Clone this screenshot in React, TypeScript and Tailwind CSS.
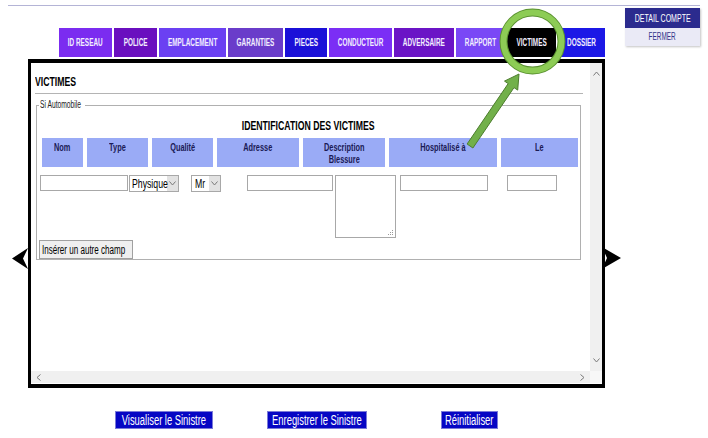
import React from "react";

const N = ({
  children,
  left = false,
  tight = false,
  className = "",
}: {
  children: React.ReactNode;
  left?: boolean;
  tight?: boolean;
  className?: string;
}) => (
  <span
    className={`inline-block whitespace-nowrap ${tight ? "scale-x-[0.64]" : "scale-x-[0.67]"} ${
      left ? "origin-left" : "origin-center"
    } ${className}`}
  >
    {children}
  </span>
);

const tabs: { label: string; w: string; bg: string }[] = [
  { label: "ID RESEAU", w: "w-[53px]", bg: "bg-[#7b2cf0]" },
  { label: "POLICE", w: "w-[43px]", bg: "bg-[#6a0fbf]" },
  { label: "EMPLACEMENT", w: "w-[67px]", bg: "bg-[#6b40f2]" },
  { label: "GARANTIES", w: "w-[55px]", bg: "bg-[#6a3cca]" },
  { label: "PIECES", w: "w-[42px]", bg: "bg-[#1b10d8]" },
  { label: "CONDUCTEUR", w: "w-[63px]", bg: "bg-[#7b2ef5]" },
  { label: "ADVERSAIRE", w: "w-[60px]", bg: "bg-[#6b14c6]" },
  { label: "RAPPORT", w: "w-[49px]", bg: "bg-[#7a48f6]" },
  { label: "VICTIMES", w: "w-[49px]", bg: "bg-black" },
  { label: "DOSSIER", w: "w-[47px]", bg: "bg-[#1c18e6]" },
];

const headers: { label: string; w: string }[] = [
  { label: "Nom", w: "w-[41px]" },
  { label: "Type", w: "w-[61px]" },
  { label: "Qualité", w: "w-[61px]" },
  { label: "Adresse", w: "w-[82px]" },
  { label: "Description|Blessure", w: "w-[82px]" },
  { label: "Hospitalisé à", w: "w-[108px]" },
  { label: "Le", w: "w-[77px]" },
];

const Chev = () => (
  <svg width="7" height="5" viewBox="0 0 7 5" className="block">
    <polyline points="0.5,0.5 3.5,4 6.5,0.5" fill="none" stroke="#7a7a7a" strokeWidth="1" />
  </svg>
);

export default function App() {
  return (
    <div className="relative w-[708px] h-[438px] overflow-hidden bg-white font-['Liberation_Sans',Arial,sans-serif]">
      <div className="ml-[8px] mt-[5px] h-px w-[692px] bg-[#b4b4d6]" />
      <div className="flex items-start">
        <div className="flex w-[617px] flex-col">
          {/* Tabs */}
          <div className="ml-[59px] mt-[22px] flex h-[29px] gap-[2px]">
            {tabs.map((t) => (
              <div
                key={t.label}
                className={`${t.w} ${t.bg} flex items-center justify-center text-[10px] font-bold leading-[12px] text-[#f2eeff]`}
              >
                <N tight>{t.label}</N>
              </div>
            ))}
          </div>

          {/* Main panel */}
          <div className="relative ml-[28px] mt-[2px] flex h-[329px] w-[577px] flex-col border-x-[3px] border-y-4 border-black">
            <div className="flex h-[308px]">
              <div className="min-w-0 flex-1 pl-[4px] pr-[7px]">
                <div className="mt-[11px] h-[20px] border-b border-[#b4b4b4] text-[13px] font-bold leading-[16px] text-black">
                  <N left>VICTIMES</N>
                </div>
                <fieldset className="ml-[1px] mt-[5px] w-[545px] border border-[#b0b0b0] px-[2px]">
                  <legend className="w-[46px] px-[1px] text-[10px] leading-[12px] text-[#222]">
                    <N left>Si Automobile</N>
                  </legend>
                  <div className="mt-[7px] h-[16px] text-center text-[13px] font-bold leading-[16px] text-black">
                    <N>IDENTIFICATION DES VICTIMES</N>
                  </div>
                  <div className="ml-[3px] mt-[4px] flex gap-[4px]">
                    {headers.map((h, i) => (
                      <div
                        key={i}
                        className={`${h.w} flex h-[29px] flex-col items-center bg-[#9aabf6] pt-[3px] text-[11px] font-bold leading-[12px] text-[#1a1a55]`}
                      >
                        {h.label.split("|").map((l) => (
                          <N key={l}>{l}</N>
                        ))}
                      </div>
                    ))}
                  </div>
                  {/* Data row */}
                  <div className="mt-[8px] flex items-start">
                    <input readOnly className="ml-[1px] h-[16px] w-[88px] border border-[#a8a8a8] bg-white" />
                    <div className="ml-[1px] flex h-[17px] w-[50px] border border-[#a8a8a8] bg-white">
                      <div className="w-[37px] shrink-0 overflow-visible pl-[2px] text-[13px] leading-[15px] text-black">
                        <N left>Physique</N>
                      </div>
                      <div className="flex w-[11px] shrink-0 items-center justify-center bg-[#e2e2e2]">
                        <Chev />
                      </div>
                    </div>
                    <div className="ml-[12px] flex h-[17px] w-[30px] border border-[#a8a8a8] bg-white">
                      <div className="w-[17px] shrink-0 overflow-visible pl-[3px] text-[13px] leading-[15px] text-black">
                        <N left>Mr</N>
                      </div>
                      <div className="flex w-[11px] shrink-0 items-center justify-center bg-[#e2e2e2]">
                        <Chev />
                      </div>
                    </div>
                    <input readOnly className="ml-[26px] h-[16px] w-[86px] border border-[#a8a8a8] bg-white" />
                    <div className="relative ml-[2px] h-[63px] w-[61px] border border-[#a8a8a8] bg-white">
                      <svg width="7" height="7" viewBox="0 0 7 7" className="absolute bottom-[1px] right-[1px]">
                        <g fill="#9a9a9a">
                          <rect x="5" y="1" width="1" height="1" />
                          <rect x="3" y="3" width="1" height="1" />
                          <rect x="5" y="3" width="1" height="1" />
                          <rect x="1" y="5" width="1" height="1" />
                          <rect x="3" y="5" width="1" height="1" />
                          <rect x="5" y="5" width="1" height="1" />
                        </g>
                      </svg>
                    </div>
                    <input readOnly className="ml-[4px] h-[16px] w-[88px] border border-[#a8a8a8] bg-white" />
                    <input readOnly className="ml-[19px] h-[16px] w-[50px] border border-[#a8a8a8] bg-white" />
                  </div>
                  <div className="mt-[2px] flex h-[19px] w-[94px] items-center border border-[#a0a0a0] bg-[#efefef] pl-[2px] text-[12px] leading-[14px] text-black">
                    <N left>Insérer un autre champ</N>
                  </div>
                </fieldset>
              </div>
              <div className="flex w-[12px] shrink-0 flex-col items-center justify-between bg-[#f0f0f0] pb-[8px] pt-[8px]">
                <div className="rotate-180">
                  <Chev />
                </div>
                <Chev />
              </div>
            </div>
            <div className="flex h-[13px]">
              <div className="flex h-[12px] flex-1 items-center justify-between bg-[#f0f0f0] px-[4px]">
                <div className="rotate-90">
                  <Chev />
                </div>
                <div className="-rotate-90">
                  <Chev />
                </div>
              </div>
              <div className="h-[12px] w-[12px] bg-[#f7f7f7]" />
            </div>

            {/* Side arrows */}
            <svg width="17" height="21" viewBox="0 0 17 21" className="absolute left-[-19px] top-[185px]">
              <polygon points="0,10.5 16,0 11,10.5 16,21" fill="#000" />
            </svg>
            <svg width="20" height="22" viewBox="0 0 20 22" className="absolute right-[-20px] top-[184px]">
              <polygon points="0,0 19,11 0,22 5,11" fill="#000" />
            </svg>
          </div>

          {/* Bottom buttons */}
          <div className="ml-[115px] mt-[23px] flex h-[18px]">
            <div className="flex w-[98px] items-center justify-center border border-[#7b7bd8] bg-[#0606c4] text-[14px] leading-[16px] text-white">
              <N>Visualiser le Sinistre</N>
            </div>
            <div className="ml-[54px] flex w-[100px] items-center justify-center border border-[#7b7bd8] bg-[#0606c4] text-[14px] leading-[16px] text-white">
              <N>Enregistrer le Sinistre</N>
            </div>
            <div className="ml-[74px] flex w-[57px] items-center justify-center border border-[#7b7bd8] bg-[#0606c4] text-[14px] leading-[16px] text-white">
              <N>Réinitialiser</N>
            </div>
          </div>
        </div>

        {/* Detail compte */}
        <div className="ml-[8px] mt-[2px] w-[75px] shadow-[1px_1px_2px_#c4c4c4]">
          <div className="flex h-[20px] items-center justify-center bg-[#2b2b8e] text-[11px] leading-[13px] text-white">
            <N tight>DETAIL COMPTE</N>
          </div>
          <div className="flex h-[18px] items-center justify-center bg-[#eaeaf6] text-[10px] leading-[12px] text-[#34348a]">
            <N tight>FERMER</N>
          </div>
        </div>
      </div>

      {/* Green highlight overlay */}
      <svg
        width="708"
        height="438"
        viewBox="0 0 708 438"
        className="pointer-events-none absolute left-0 top-0"
      >
        <circle cx="532.5" cy="41.5" r="29" fill="none" stroke="#5a9130" strokeWidth="8" />
        <circle cx="532.5" cy="41.5" r="29" fill="none" stroke="#8dcc55" strokeWidth="6" />
        <polygon
          points="467.1,144 508.2,83.6 504.5,81.1 519,74 517.7,90.1 514,87.6 472.9,148"
          fill="#72b04a"
          stroke="#4d7d2e"
          strokeWidth="1"
          strokeLinejoin="round"
        />
      </svg>
    </div>
  );
}
